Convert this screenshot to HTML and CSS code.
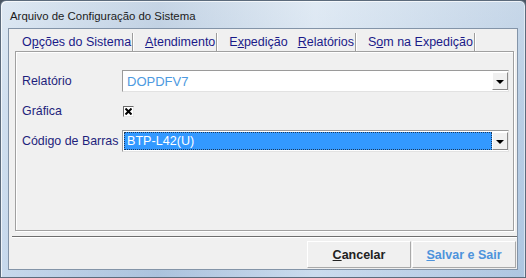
FILE: index.html
```html
<!DOCTYPE html>
<html lang="pt">
<head>
  <meta charset="UTF-8" />
  <title>Arquivo de Configuração do Sistema</title>
  <link rel="stylesheet" href="styles.css">
</head>
<body>
  <div class="window">
    <div class="titlebar">Arquivo de Configuração do Sistema</div>

    <div class="client">
      <!-- page control with flat tabs -->
      <div class="tabs">
        <span class="tab">O<u>p</u>ções do Sistema</span>
        <span class="tab"><u>A</u>tendimento</span>
        <span class="tab before-active">E<u>x</u>pedição</span>
        <span class="tab active"><u>R</u>elatórios</span>
        <span class="tab">S<u>o</u>m na Expedição</span>
      </div>

      <div class="page">
        <label class="label">Relatório</label>
        <div class="combo">
          <span class="combo-text faded">DOPDFV7</span>
          <span class="combo-btn"><i class="arrow"></i></span>
        </div>

        <label class="label">Gráfica</label>
        <div class="check-cell">
          <span class="check">
            <svg width="7" height="7" viewBox="0 0 7 7">
              <path d="M0.5 0.5 L6.5 6.5 M6.5 0.5 L0.5 6.5" stroke="#000" stroke-width="2" />
            </svg>
          </span>
        </div>

        <label class="label">Código de Barras</label>
        <div class="combo focused">
          <span class="combo-text">BTP-L42(U)</span>
          <span class="combo-btn"><i class="arrow"></i></span>
        </div>
      </div>

      <div class="buttons">
        <button class="btn"><u>C</u>ancelar</button>
        <button class="btn hot"><u>S</u>alvar e Sair</button>
      </div>
    </div>
  </div>
</body>
</html>
```

FILE: styles.css
```css
* {
  box-sizing: border-box;
}

body {
  margin: 0;
  background: #4b5663;
  font-family: "Liberation Sans", Arial, sans-serif;
  font-size: 12px;
}

/* Window frame (glass border) */
.window {
  width: 526px;
  height: 278px;
  display: flex;
  flex-direction: column;
  padding: 0 7px 7px 7px;
  border: 1px solid #5c6b7c;
  border-radius: 6px 6px 0 0;
  background:
    linear-gradient(to right, rgba(255,255,255,0.25), rgba(120,140,170,0.15) 30%, rgba(255,255,255,0.3) 60%, rgba(150,175,205,0.2)),
    linear-gradient(to bottom, #d3e1ef, #c1d5ea 40%, #b4cce6);
  box-shadow: inset 1px 1px 0 rgba(255,255,255,0.7), inset -1px 0 0 rgba(255,255,255,0.5);
}

.titlebar {
  height: 27px;
  flex: none;
  display: flex;
  align-items: center;
  padding-left: 2px;
  padding-top: 2px;
  color: #1c1c1c;
  font-size: 11.4px;
}

/* Client area */
.client {
  flex: 1;
  display: flex;
  flex-direction: column;
  background: #f0f0f0;
  border: 1px solid #8394a8;
}

/* Tabs row */
.tabs {
  height: 22px;
  flex: none;
  display: flex;
  align-items: flex-end;
  padding-left: 2px;
}

.tab {
  display: flex;
  align-items: center;
  height: 18px;
  padding: 0 1px 1px 11px;
  color: #1a1a88;
  font-size: 12.5px;
  border-right: 1px solid #9c9c9c;
  box-shadow: 1px 0 0 #fff;
  margin-right: 1px;
}

/* separator next to the pressed tab is hidden */
.tab.before-active {
  border-right-color: transparent;
  box-shadow: none;
  margin-right: -3px;
}

/* Etched tab sheet */
.page {
  height: 180px;
  margin: 0 3px 0 6px;
  border: 1px solid #a0a0a0;
  box-shadow: 1px 1px 0 #fff, inset 1px 1px 0 #fff;
  padding: 18px 4px 0 6px;
  display: grid;
  grid-template-columns: 100px 1fr;
  grid-auto-rows: 22px;
  row-gap: 8px;
  align-items: center;
}

.label {
  color: #1f1f7c;
  font-size: 12.4px;
}

/* Combo boxes */
.combo {
  height: 22px;
  display: flex;
  background: #fff;
  border: 1px solid;
  border-color: #9a9a9a #e2e2e2 #e2e2e2 #9a9a9a;
  padding: 1px 0 1px 1px;
}

.combo-text {
  flex: 1;
  display: flex;
  align-items: center;
  padding-left: 3px;
  font-size: 13px;
}

.combo-text.faded {
  color: #4d9ae0;
}

.combo.focused .combo-text {
  background: #3399ff;
  color: #fff;
  font-size: 12.6px;
  outline: 1px dotted #1d3a5c;
  outline-offset: -1px;
}

.combo-btn {
  width: 16px;
  flex: none;
  display: flex;
  align-items: center;
  justify-content: center;
  background: #f0f0f0;
  border: 1px solid;
  border-color: #fff #8a8a8a #8a8a8a #fff;
}

.arrow {
  width: 0;
  height: 0;
  border-left: 4px solid transparent;
  border-right: 4px solid transparent;
  border-top: 4px solid #000;
  margin-top: 1px;
}

/* Checkbox */
.check-cell {
  display: flex;
  align-items: center;
  padding-left: 1px;
}

.check {
  width: 11px;
  height: 11px;
  display: flex;
  align-items: center;
  justify-content: center;
  background: #fff;
  border: 1px solid;
  border-color: #6a6a6a #e8e8e8 #e8e8e8 #6a6a6a;
}

/* Bottom button bar */
.buttons {
  flex: 1;
  margin: 5px 0 0 3px;
  border-top: 1px solid #6e6e6e;
  box-shadow: inset 0 1px 0 #fff;
  display: flex;
  justify-content: flex-end;
  align-items: flex-start;
  padding: 4px 1px 0 0;
}

.btn {
  width: 104px;
  height: 27px;
  margin-left: 1px;
  font-family: inherit;
  font-size: 12.5px;
  font-weight: bold;
  color: #222;
  background: #f0f0f0;
  border: 1px solid;
  border-color: #fff #a9a9a9 #a9a9a9 #fff;
  padding: 0;
}

.btn.hot {
  color: #4d93dc;
}
```
